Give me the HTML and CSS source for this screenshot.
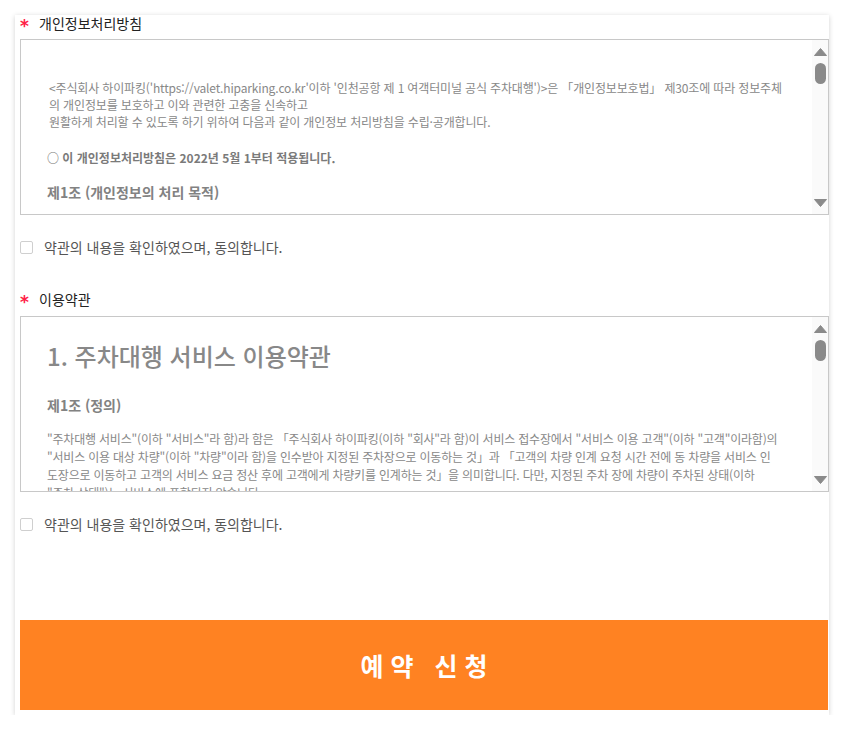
FILE: index.html
```html
<!DOCTYPE html>
<html lang="ko">
<head>
    <meta charset="UTF-8">
    <meta name="viewport" content="width=device-width, initial-scale=1.0">
    <title>예약 신청</title>
    <link rel="stylesheet" href="styles.css">
</head>
<body>
    <div class="card">
        <!-- 개인정보처리방침 -->
        <div class="field-label"><span class="required">*</span>개인정보처리방침</div>
        <div class="terms-box">
            <div class="terms-content privacy">
                <p class="intro">&lt;주식회사 하이파킹('https://valet.hiparking.co.kr'이하 '인천공항 제 1 여객터미널 공식 주차대행')&gt;은 「개인정보보호법」 제30조에 따라 정보주체<br>의 개인정보를 보호하고 이와 관련한 고충을 신속하고<br>원활하게 처리할 수 있도록 하기 위하여 다음과 같이 개인정보 처리방침을 수립·공개합니다.</p>
                <p class="notice">○ 이 개인정보처리방침은 2022년 5월 1부터 적용됩니다.</p>
                <p class="article">제1조 (개인정보의 처리 목적)</p>
            </div>
            <div class="scrollbar">
                <svg class="arrow up" width="13" height="8" viewBox="0 0 13 8"><path d="M6.5 0.5 L12.5 7.5 L0.5 7.5 Z" fill="#8a8a8a" stroke="#8a8a8a" stroke-linejoin="round"/></svg>
                <div class="thumb"></div>
                <div class="spacer"></div>
                <svg class="arrow down" width="13" height="8" viewBox="0 0 13 8"><path d="M0.5 0.5 L12.5 0.5 L6.5 7.5 Z" fill="#8a8a8a" stroke="#8a8a8a" stroke-linejoin="round"/></svg>
            </div>
        </div>
        <label class="agree"><span class="checkbox"></span>약관의 내용을 확인하였으며, 동의합니다.</label>

        <!-- 이용약관 -->
        <div class="field-label second"><span class="required">*</span>이용약관</div>
        <div class="terms-box">
            <div class="terms-content usage">
                <h2>1. 주차대행 서비스 이용약관</h2>
                <p class="article">제1조 (정의)</p>
                <p class="body-text">"주차대행 서비스"(이하 "서비스"라 함)라 함은 「주식회사 하이파킹(이하 "회사"라 함)이 서비스 접수장에서 "서비스 이용 고객"(이하 "고객"이라함)의<br>"서비스 이용 대상 차량"(이하 "차량"이라 함)을 인수받아 지정된 주차장으로 이동하는 것」과 「고객의 차량 인계 요청 시간 전에 동 차량을 서비스 인<br>도장으로 이동하고 고객의 서비스 요금 정산 후에 고객에게 차량키를 인계하는 것」을 의미합니다. 다만, 지정된 주차 장에 차량이 주차된 상태(이하<br>"주차 상태")는 서비스에 포함되지 않습니다.</p>
            </div>
            <div class="scrollbar">
                <svg class="arrow up" width="13" height="8" viewBox="0 0 13 8"><path d="M6.5 0.5 L12.5 7.5 L0.5 7.5 Z" fill="#8a8a8a" stroke="#8a8a8a" stroke-linejoin="round"/></svg>
                <div class="thumb"></div>
                <div class="spacer"></div>
                <svg class="arrow down" width="13" height="8" viewBox="0 0 13 8"><path d="M0.5 0.5 L12.5 0.5 L6.5 7.5 Z" fill="#8a8a8a" stroke="#8a8a8a" stroke-linejoin="round"/></svg>
            </div>
        </div>
        <label class="agree"><span class="checkbox"></span>약관의 내용을 확인하였으며, 동의합니다.</label>

        <button type="button" class="submit">예약 신청</button>
    </div>
</body>
</html>
```

FILE: styles.css
```css
body {
    margin: 0;
    background: #ffffff;
    font-family: "Noto Sans CJK KR", "Noto Sans", sans-serif;
    color: #333;
}
.card {
    margin: 15px 0 0 15px;
    width: 809px;
    padding: 0 0 5px 5px;
    background: #fff;
    box-shadow: 0 1px 5px rgba(0, 0, 0, 0.18);
}
.field-label {
    display: flex;
    align-items: center;
    height: 16px;
    font-size: 14px;
    color: #222;
    margin-bottom: 8px;
}
.field-label.second {
    margin-top: 34px;
    margin-bottom: 9px;
}
.required {
    color: #ff2046;
    display: inline-block;
    width: 19px;
    font-family: "DejaVu Sans", sans-serif;
    font-size: 17px;
    font-weight: bold;
    line-height: 16px;
    padding-top: 5px;
}
.terms-box {
    display: flex;
    height: 174px;
    border: 1px solid #c8c8c8;
    overflow: hidden;
}
.terms-content {
    flex: 1;
    overflow: hidden;
    color: #888;
    white-space: nowrap;
}
.terms-content p {
    margin: 0;
}
.privacy {
    padding: 39px 0 0 26px;
}
.privacy .intro {
    font-size: 12px;
    line-height: 17px;
    padding-left: 2px;
    letter-spacing: -0.15px;
}
.privacy .notice {
    font-size: 12px;
    font-weight: bold;
    line-height: 17px;
    margin-top: 19px;
    color: #7a7a7a;
}
.article {
    font-size: 14px;
    font-weight: bold;
    line-height: 20px;
    color: #828282;
}
.privacy .article {
    margin-top: 16px;
}
.usage {
    padding: 23px 0 0 26px;
}
.usage h2 {
    margin: 0;
    font-size: 24px;
    font-weight: 500;
    line-height: 32px;
    color: #888;
}
.usage .article {
    margin-top: 23px;
}
.usage .body-text {
    margin-top: 15px;
    font-size: 12px;
    line-height: 18px;
    letter-spacing: -0.2px;
}
.scrollbar {
    width: 16px;
    background: #fafafa;
    display: flex;
    flex-direction: column;
    align-items: center;
}
.arrow.up {
    margin-top: 8px;
}
.arrow.down {
    margin-bottom: 7px;
}
.thumb {
    width: 11px;
    height: 21px;
    margin-top: 7px;
    border-radius: 6px;
    background: #8a8a8a;
}
.spacer {
    flex: 1;
}
.agree {
    display: flex;
    align-items: center;
    height: 20px;
    margin-top: 22px;
    font-size: 14px;
    color: #555;
}
.checkbox {
    width: 11px;
    height: 11px;
    border: 1px solid #cfcfcf;
    border-radius: 2px;
    margin-right: 11px;
    background: #fff;
}
.submit {
    display: block;
    width: 808px;
    height: 90px;
    margin-top: 86px;
    border: none;
    background: #ff8222;
    color: #fff;
    font-family: "Noto Sans CJK KR", sans-serif;
    font-size: 25px;
    font-weight: bold;
    letter-spacing: 7px;
    text-indent: 7px;
    padding: 0;
}
```
